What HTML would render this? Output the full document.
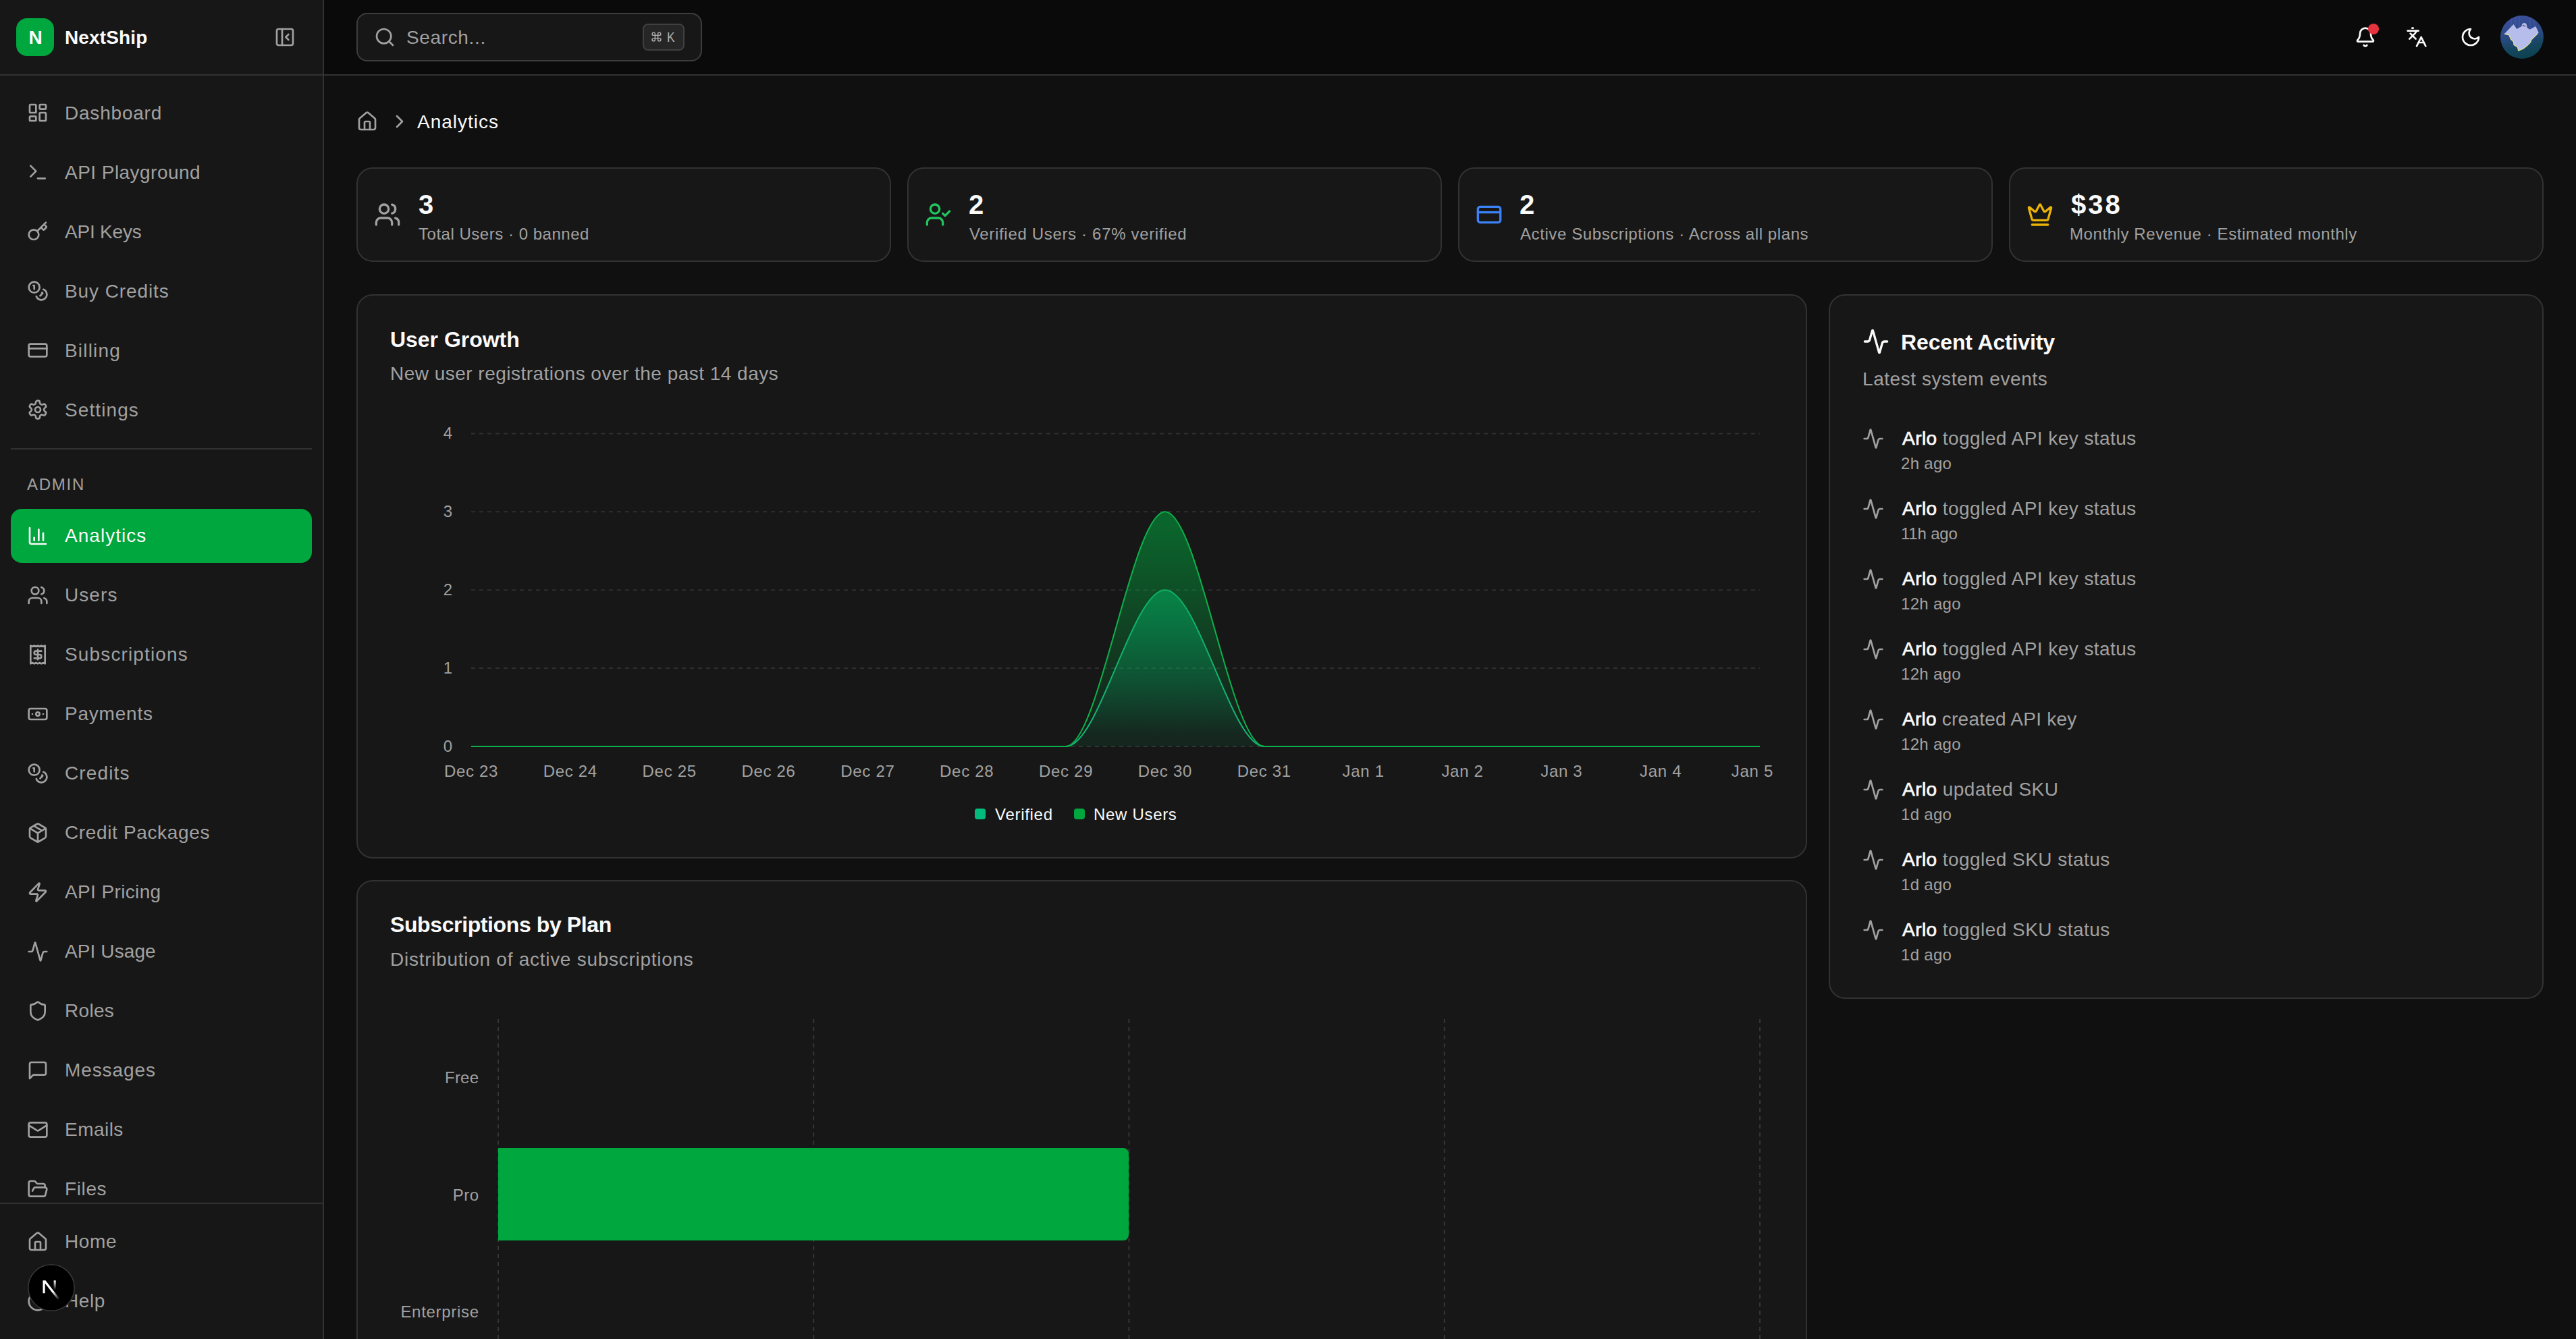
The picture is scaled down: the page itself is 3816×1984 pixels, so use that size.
<!DOCTYPE html><html><head><meta charset="utf-8"><title>Analytics</title><style>
*{box-sizing:border-box;margin:0;padding:0}
html,body{width:3816px;height:1984px;overflow:hidden;background:#101010;font-family:"Liberation Sans", sans-serif}
.t{position:absolute;white-space:nowrap}
.r{position:absolute}
.ic{position:absolute;overflow:visible}
</style></head><body>
<div class="r" style="left:480px;top:0px;width:3336px;height:112px;background:#0a0a0a;border-radius:0px;border-bottom:2px solid #323232"></div>
<div class="r" style="left:0px;top:0px;width:480px;height:1984px;background:#171717;border-radius:0px;border-right:2px solid #323232"></div>
<div class="r" style="left:0px;top:110px;width:478px;height:2px;background:#323232;border-radius:0px;"></div>
<div class="r" style="left:24px;top:27px;width:56px;height:56px;background:#00a63e;border-radius:16px;"></div>
<div class="t" style="left:42.5px;top:42.3px;font-size:28px;line-height:28px;color:#fff;font-weight:700;letter-spacing:0px;">N</div>
<div class="t" style="left:96.0px;top:42.3px;font-size:28px;line-height:28px;color:#fafafa;font-weight:700;letter-spacing:0.14px;">NextShip</div>
<svg class="ic" style="left:406.0px;top:39.0px;width:32px;height:32px" viewBox="0 0 24 24" fill="none" stroke="#a1a1a1" stroke-width="2" stroke-linecap="round" stroke-linejoin="round"><rect width="18" height="18" x="3" y="3" rx="2"/><path d="M9 3v18"/><path d="m16 15-3-3 3-3"/></svg>
<svg class="ic" style="left:40.0px;top:151.0px;width:32px;height:32px" viewBox="0 0 24 24" fill="none" stroke="#a1a1a1" stroke-width="2" stroke-linecap="round" stroke-linejoin="round"><rect x="3" y="3" width="7" height="9" rx="1"/><rect x="14" y="3" width="7" height="5" rx="1"/><rect x="14" y="12" width="7" height="9" rx="1"/><rect x="3" y="16" width="7" height="5" rx="1"/></svg>
<div class="t" style="left:96.0px;top:154.3px;font-size:28px;line-height:28px;color:#a1a1a1;font-weight:400;letter-spacing:0.79px;">Dashboard</div>
<svg class="ic" style="left:40.0px;top:239.0px;width:32px;height:32px" viewBox="0 0 24 24" fill="none" stroke="#a1a1a1" stroke-width="2" stroke-linecap="round" stroke-linejoin="round"><path d="m4 17 6-6-6-6"/><path d="M12 19h8"/></svg>
<div class="t" style="left:96.0px;top:242.3px;font-size:28px;line-height:28px;color:#a1a1a1;font-weight:400;letter-spacing:0.46px;">API Playground</div>
<svg class="ic" style="left:40.0px;top:327.0px;width:32px;height:32px" viewBox="0 0 24 24" fill="none" stroke="#a1a1a1" stroke-width="2" stroke-linecap="round" stroke-linejoin="round"><path d="m15.5 7.5 2.3 2.3a1 1 0 0 0 1.4 0l2.1-2.1a1 1 0 0 0 0-1.4L19 4"/><path d="m21 2-9.6 9.6"/><circle cx="7.5" cy="15.5" r="5.5"/></svg>
<div class="t" style="left:96.0px;top:330.3px;font-size:28px;line-height:28px;color:#a1a1a1;font-weight:400;letter-spacing:-0.2px;">API Keys</div>
<svg class="ic" style="left:40.0px;top:415.0px;width:32px;height:32px" viewBox="0 0 24 24" fill="none" stroke="#a1a1a1" stroke-width="2" stroke-linecap="round" stroke-linejoin="round"><circle cx="8" cy="8" r="6"/><path d="M18.09 10.37A6 6 0 1 1 10.34 18"/><path d="M7 6h1v4"/><path d="m16.71 13.88.7.71-2.82 2.82"/></svg>
<div class="t" style="left:96.0px;top:418.3px;font-size:28px;line-height:28px;color:#a1a1a1;font-weight:400;letter-spacing:0.9px;">Buy Credits</div>
<svg class="ic" style="left:40.0px;top:503.0px;width:32px;height:32px" viewBox="0 0 24 24" fill="none" stroke="#a1a1a1" stroke-width="2" stroke-linecap="round" stroke-linejoin="round"><rect width="20" height="14" x="2" y="5" rx="2"/><line x1="2" x2="22" y1="10" y2="10"/></svg>
<div class="t" style="left:96.0px;top:506.3px;font-size:28px;line-height:28px;color:#a1a1a1;font-weight:400;letter-spacing:1.17px;">Billing</div>
<svg class="ic" style="left:40.0px;top:591.0px;width:32px;height:32px" viewBox="0 0 24 24" fill="none" stroke="#a1a1a1" stroke-width="2" stroke-linecap="round" stroke-linejoin="round"><path d="M12.22 2h-.44a2 2 0 0 0-2 2v.18a2 2 0 0 1-1 1.73l-.43.25a2 2 0 0 1-2 0l-.15-.08a2 2 0 0 0-2.73.73l-.22.38a2 2 0 0 0 .73 2.73l.15.1a2 2 0 0 1 1 1.72v.51a2 2 0 0 1-1 1.74l-.15.09a2 2 0 0 0-.73 2.730l.22.38a2 2 0 0 0 2.73.73l.15-.08a2 2 0 0 1 2 0l.43.25a2 2 0 0 1 1 1.73V20a2 2 0 0 0 2 2h.44a2 2 0 0 0 2-2v-.18a2 2 0 0 1 1-1.73l.43-.25a2 2 0 0 1 2 0l.15.08a2 2 0 0 0 2.73-.73l.22-.39a2 2 0 0 0-.73-2.73l-.15-.08a2 2 0 0 1-1-1.74v-.5a2 2 0 0 1 1-1.74l.15-.09a2 2 0 0 0 .73-2.73l-.22-.38a2 2 0 0 0-2.73-.73l-.15.08a2 2 0 0 1-2 0l-.43-.25a2 2 0 0 1-1-1.73V4a2 2 0 0 0-2-2z"/><circle cx="12" cy="12" r="3"/></svg>
<div class="t" style="left:96.0px;top:594.3px;font-size:28px;line-height:28px;color:#a1a1a1;font-weight:400;letter-spacing:1.1px;">Settings</div>
<div class="r" style="left:16px;top:664px;width:446px;height:2px;background:#323232;border-radius:0px;"></div>
<div class="t" style="left:40.0px;top:705.7px;font-size:24px;line-height:24px;color:#a1a1a1;font-weight:400;letter-spacing:1.75px;">ADMIN</div>
<div class="r" style="left:16px;top:754px;width:446px;height:80px;background:#00a63e;border-radius:16px;"></div>
<svg class="ic" style="left:40.0px;top:778.0px;width:32px;height:32px" viewBox="0 0 24 24" fill="none" stroke="#fafafa" stroke-width="2" stroke-linecap="round" stroke-linejoin="round"><path d="M3 3v16a2 2 0 0 0 2 2h16"/><path d="M18 17V9"/><path d="M13 17V5"/><path d="M8 17v-3"/></svg>
<div class="t" style="left:96.0px;top:780.3px;font-size:28px;line-height:28px;color:#fafafa;font-weight:400;letter-spacing:1.03px;">Analytics</div>
<svg class="ic" style="left:40.0px;top:866.0px;width:32px;height:32px" viewBox="0 0 24 24" fill="none" stroke="#a1a1a1" stroke-width="2" stroke-linecap="round" stroke-linejoin="round"><path d="M16 21v-2a4 4 0 0 0-4-4H6a4 4 0 0 0-4 4v2"/><circle cx="9" cy="7" r="4"/><path d="M22 21v-2a4 4 0 0 0-3-3.87"/><path d="M16 3.13a4 4 0 0 1 0 7.75"/></svg>
<div class="t" style="left:96.0px;top:868.3px;font-size:28px;line-height:28px;color:#a1a1a1;font-weight:400;letter-spacing:1.07px;">Users</div>
<svg class="ic" style="left:40.0px;top:954.0px;width:32px;height:32px" viewBox="0 0 24 24" fill="none" stroke="#a1a1a1" stroke-width="2" stroke-linecap="round" stroke-linejoin="round"><path d="M4 2v20l2-1 2 1 2-1 2 1 2-1 2 1 2-1 2 1V2l-2 1-2-1-2 1-2-1-2 1-2-1-2 1Z"/><path d="M16 8h-6a2 2 0 1 0 0 4h4a2 2 0 1 1 0 4H8"/><path d="M12 17.5v-11"/></svg>
<div class="t" style="left:96.0px;top:956.3px;font-size:28px;line-height:28px;color:#a1a1a1;font-weight:400;letter-spacing:1.14px;">Subscriptions</div>
<svg class="ic" style="left:40.0px;top:1042.0px;width:32px;height:32px" viewBox="0 0 24 24" fill="none" stroke="#a1a1a1" stroke-width="2" stroke-linecap="round" stroke-linejoin="round"><rect width="20" height="12" x="2" y="6" rx="2"/><circle cx="12" cy="12" r="2"/><path d="M6 12h.01M18 12h.01"/></svg>
<div class="t" style="left:96.0px;top:1044.3px;font-size:28px;line-height:28px;color:#a1a1a1;font-weight:400;letter-spacing:0.79px;">Payments</div>
<svg class="ic" style="left:40.0px;top:1130.0px;width:32px;height:32px" viewBox="0 0 24 24" fill="none" stroke="#a1a1a1" stroke-width="2" stroke-linecap="round" stroke-linejoin="round"><circle cx="8" cy="8" r="6"/><path d="M18.09 10.37A6 6 0 1 1 10.34 18"/><path d="M7 6h1v4"/><path d="m16.71 13.88.7.71-2.82 2.82"/></svg>
<div class="t" style="left:96.0px;top:1132.3px;font-size:28px;line-height:28px;color:#a1a1a1;font-weight:400;letter-spacing:1.12px;">Credits</div>
<svg class="ic" style="left:40.0px;top:1218.0px;width:32px;height:32px" viewBox="0 0 24 24" fill="none" stroke="#a1a1a1" stroke-width="2" stroke-linecap="round" stroke-linejoin="round"><path d="M11 21.73a2 2 0 0 0 2 0l7-4A2 2 0 0 0 21 16V8a2 2 0 0 0-1-1.73l-7-4a2 2 0 0 0-2 0l-7 4A2 2 0 0 0 3 8v8a2 2 0 0 0 1 1.73z"/><path d="M12 22V12"/><path d="m3.3 7 7.703 4.734a2 2 0 0 0 1.994 0L20.7 7"/><path d="m7.5 4.27 9 5.15"/></svg>
<div class="t" style="left:96.0px;top:1220.3px;font-size:28px;line-height:28px;color:#a1a1a1;font-weight:400;letter-spacing:0.64px;">Credit Packages</div>
<svg class="ic" style="left:40.0px;top:1306.0px;width:32px;height:32px" viewBox="0 0 24 24" fill="none" stroke="#a1a1a1" stroke-width="2" stroke-linecap="round" stroke-linejoin="round"><path d="M4 14a1 1 0 0 1-.78-1.63l9.9-10.2a.5.5 0 0 1 .86.46l-1.92 6.02A1 1 0 0 0 13 10h7a1 1 0 0 1 .78 1.63l-9.9 10.2a.5.5 0 0 1-.86-.46l1.92-6.02A1 1 0 0 0 11 14z"/></svg>
<div class="t" style="left:96.0px;top:1308.3px;font-size:28px;line-height:28px;color:#a1a1a1;font-weight:400;letter-spacing:0.37px;">API Pricing</div>
<svg class="ic" style="left:40.0px;top:1394.0px;width:32px;height:32px" viewBox="0 0 24 24" fill="none" stroke="#a1a1a1" stroke-width="2" stroke-linecap="round" stroke-linejoin="round"><path d="M22 12h-2.48a2 2 0 0 0-1.930 1.46l-2.35 8.36a.25.25 0 0 1-.48 0L9.24 2.18a.25.25 0 0 0-.48 0l-2.35 8.36A2 2 0 0 1 4.49 12H2"/></svg>
<div class="t" style="left:96.0px;top:1396.3px;font-size:28px;line-height:28px;color:#a1a1a1;font-weight:400;letter-spacing:0.1px;">API Usage</div>
<svg class="ic" style="left:40.0px;top:1482.0px;width:32px;height:32px" viewBox="0 0 24 24" fill="none" stroke="#a1a1a1" stroke-width="2" stroke-linecap="round" stroke-linejoin="round"><path d="M20 13c0 5-3.5 7.5-7.66 8.95a1 1 0 0 1-.67-.01C7.5 20.5 4 18 4 13V6a1 1 0 0 1 1-1c2 0 4.5-1.2 6.24-2.72a1.17 1.17 0 0 1 1.52 0C14.51 3.810 17 5 19 5a1 1 0 0 1 1 1z"/></svg>
<div class="t" style="left:96.0px;top:1484.3px;font-size:28px;line-height:28px;color:#a1a1a1;font-weight:400;letter-spacing:0.3px;">Roles</div>
<svg class="ic" style="left:40.0px;top:1570.0px;width:32px;height:32px" viewBox="0 0 24 24" fill="none" stroke="#a1a1a1" stroke-width="2" stroke-linecap="round" stroke-linejoin="round"><path d="M21 15a2 2 0 0 1-2 2H7l-4 4V5a2 2 0 0 1 2-2h14a2 2 0 0 1 2 2z"/></svg>
<div class="t" style="left:96.0px;top:1572.3px;font-size:28px;line-height:28px;color:#a1a1a1;font-weight:400;letter-spacing:0.9px;">Messages</div>
<svg class="ic" style="left:40.0px;top:1658.0px;width:32px;height:32px" viewBox="0 0 24 24" fill="none" stroke="#a1a1a1" stroke-width="2" stroke-linecap="round" stroke-linejoin="round"><rect width="20" height="16" x="2" y="4" rx="2"/><path d="m22 7-8.97 5.7a1.94 1.94 0 0 1-2.06 0L2 7"/></svg>
<div class="t" style="left:96.0px;top:1660.3px;font-size:28px;line-height:28px;color:#a1a1a1;font-weight:400;letter-spacing:0.46px;">Emails</div>
<svg class="ic" style="left:40.0px;top:1746.0px;width:32px;height:32px" viewBox="0 0 24 24" fill="none" stroke="#a1a1a1" stroke-width="2" stroke-linecap="round" stroke-linejoin="round"><path d="m6 14 1.5-2.9A2 2 0 0 1 9.240 10H20a2 2 0 0 1 1.94 2.5l-1.54 6a2 2 0 0 1-1.95 1.5H4a2 2 0 0 1-2-2V5a2 2 0 0 1 2-2h3.9a2 2 0 0 1 1.69.9l.81 1.2a2 2 0 0 0 1.67.9H18a2 2 0 0 1 2 2v2"/></svg>
<div class="t" style="left:96.0px;top:1748.3px;font-size:28px;line-height:28px;color:#a1a1a1;font-weight:400;letter-spacing:0.62px;">Files</div>
<div class="r" style="left:0px;top:1782px;width:478px;height:202px;background:#171717;border-radius:0px;"></div>
<div class="r" style="left:0px;top:1782px;width:478px;height:2px;background:#323232;border-radius:0px;"></div>
<svg class="ic" style="left:40.0px;top:1824.0px;width:32px;height:32px" viewBox="0 0 24 24" fill="none" stroke="#a1a1a1" stroke-width="2" stroke-linecap="round" stroke-linejoin="round"><path d="M15 21v-8a1 1 0 0 0-1-1h-4a1 1 0 0 0-1 1v8"/><path d="M3 10a2 2 0 0 1 .709-1.528l7-5.999a2 2 0 0 1 2.582 0l7 5.999A2 2 0 0 1 21 10v9a2 2 0 0 1-2 2H5a2 2 0 0 1-2-2z"/></svg>
<div class="t" style="left:96.0px;top:1826.3px;font-size:28px;line-height:28px;color:#a1a1a1;font-weight:400;letter-spacing:0.6px;">Home</div>
<svg class="ic" style="left:40.0px;top:1912.0px;width:32px;height:32px" viewBox="0 0 24 24" fill="none" stroke="#a1a1a1" stroke-width="2" stroke-linecap="round" stroke-linejoin="round"><circle cx="12" cy="12" r="10"/><path d="M9.09 9a3 3 0 0 1 5.83 1c0 2-3 3-3 3"/><path d="M12 17h.01"/></svg>
<div class="t" style="left:96.0px;top:1914.3px;font-size:28px;line-height:28px;color:#a1a1a1;font-weight:400;letter-spacing:0.6px;">Help</div>
<svg class="ic" style="left:41px;top:1873px;width:70px;height:70px" viewBox="0 0 180 180"><defs><linearGradient id="nl0" gradientUnits="userSpaceOnUse" x1="109" y1="116.5" x2="144.5" y2="160.5"><stop stop-color="#fff"/><stop offset="1" stop-color="#fff" stop-opacity="0"/></linearGradient><linearGradient id="nl1" gradientUnits="userSpaceOnUse" x1="121" y1="54" x2="120.8" y2="106.9"><stop stop-color="#fff"/><stop offset="1" stop-color="#fff" stop-opacity="0"/></linearGradient><clipPath id="nlc"><circle cx="90" cy="90" r="90"/></clipPath></defs><g clip-path="url(#nlc)"><circle cx="90" cy="90" r="90" fill="#000"/><g transform="translate(-7.7,-3) translate(90 90) scale(0.68) translate(-90 -90)"><path d="M149.508 157.52L69.142 54H54V125.97H66.1136V69.3836L139.999 164.845C143.333 162.614 146.509 160.165 149.508 157.52Z" fill="url(#nl0)"/><rect x="115" y="54" width="12" height="72" fill="url(#nl1)"/></g></g><circle cx="90" cy="90" r="88" fill="none" stroke="#3a3a3a" stroke-width="4"/></svg>
<div class="r" style="left:528px;top:19px;width:512px;height:72px;background:#171717;border:2px solid #3d3d3d;border-radius:16px;"></div>
<svg class="ic" style="left:554.0px;top:39.0px;width:32px;height:32px" viewBox="0 0 24 24" fill="none" stroke="#a1a1a1" stroke-width="2" stroke-linecap="round" stroke-linejoin="round"><circle cx="11" cy="11" r="8"/><path d="m21 21-4.3-4.3"/></svg>
<div class="t" style="left:602.0px;top:42.3px;font-size:28px;line-height:28px;color:#a1a1a1;font-weight:400;letter-spacing:0.64px;">Search...</div>
<div class="r" style="left:952px;top:35px;width:62px;height:40px;background:#262626;border:2px solid #404040;border-radius:8px;"></div>
<svg class="ic" style="left:964.3px;top:45.5px;width:17px;height:17px" viewBox="0 0 24 24" fill="none" stroke="#b0b0b0" stroke-width="2.1" stroke-linecap="round" stroke-linejoin="round"><path d="M15 6v12a3 3 0 1 0 3-3H6a3 3 0 1 0 3 3V6a3 3 0 1 0-3 3h12a3 3 0 1 0-3-3"/></svg>
<div class="t" style="left:988.0px;top:45.1px;font-size:20px;line-height:20px;color:#b0b0b0;font-weight:400;letter-spacing:0px;transform:scaleX(0.87);transform-origin:0 0">K</div>
<svg class="ic" style="left:3488.0px;top:39.0px;width:32px;height:32px" viewBox="0 0 24 24" fill="none" stroke="#fafafa" stroke-width="2" stroke-linecap="round" stroke-linejoin="round"><path d="M10.268 21a2 2 0 0 0 3.464 0"/><path d="M3.262 15.326A1 1 0 0 0 4 17h16a1 1 0 0 0 .74-1.673C19.41 13.956 18 12.499 18 8A6 6 0 0 0 6 8c0 4.499-1.411 5.956-2.738 7.326"/></svg>
<div class="r" style="left:3508px;top:35px;width:16px;height:16px;background:#e7333f;border-radius:8px;"></div>
<svg class="ic" style="left:3564.0px;top:39.0px;width:32px;height:32px" viewBox="0 0 24 24" fill="none" stroke="#fafafa" stroke-width="2" stroke-linecap="round" stroke-linejoin="round"><path d="m5 8 6 6"/><path d="m4 14 6-6 2-3"/><path d="M2 5h12"/><path d="M7 2h1"/><path d="m22 22-5-10-5 10"/><path d="M14 18h6"/></svg>
<svg class="ic" style="left:3644.0px;top:39.0px;width:32px;height:32px" viewBox="0 0 24 24" fill="none" stroke="#fafafa" stroke-width="2" stroke-linecap="round" stroke-linejoin="round"><path d="M12 3a6 6 0 0 0 9 9 9 9 0 1 1-9-9Z"/></svg>
<svg class="ic" style="left:3696px;top:15px;width:80px;height:80px" viewBox="0 0 80 80"><defs><linearGradient id="av" x1="0.3" y1="0" x2="0.5" y2="1"><stop offset="0" stop-color="#3c4f9c"/><stop offset="0.45" stop-color="#2c4a86"/><stop offset="0.75" stop-color="#15465e"/><stop offset="1" stop-color="#0c4250"/></linearGradient><clipPath id="avc"><circle cx="40" cy="40" r="32"/></clipPath></defs><circle cx="40" cy="40" r="32" fill="url(#av)"/><g clip-path="url(#avc)"><path d="M30 8v34M36 8v22M52 8v30M24 12v30M58 14v26" stroke="#5567b0" stroke-width="1.6" opacity="0.35"/><path d="M43 19.1 C45.5 19 47.2 21 47.2 23.5 L47.5 25.7 L51.4 28.7 L60.3 23.9 L64.8 33.5 L63.3 34.6 L53.8 44.2 L52.6 47.8 L47.8 52.6 L41.8 57.3 L34.6 60.3 L33.5 55 L28 51.4 L27.5 47.2 L23.3 43 L20.9 37 L13.7 35.2 L27.5 20.9 L32.3 28 L39.4 24 C39.6 21 41 19.2 43 19.1 Z" fill="#b7bdeb"/><path d="M13.7 35.2 L20.9 37 L23.3 43 L27.5 47.2 L28 51.4 L33.5 55 L34.6 60.3 L41.8 57.3 L47.8 52.6 L52.6 47.8 L53.8 44.2 L63.3 34.6" fill="none" stroke="#e6e882" stroke-width="1.1"/><circle cx="41.8" cy="22.7" r="0.9" fill="#2a2a40"/><circle cx="44.2" cy="23.6" r="0.9" fill="#2a2a40"/></g></svg>
<svg class="ic" style="left:528.0px;top:164.0px;width:32px;height:32px" viewBox="0 0 24 24" fill="none" stroke="#a1a1a1" stroke-width="2" stroke-linecap="round" stroke-linejoin="round"><path d="M15 21v-8a1 1 0 0 0-1-1h-4a1 1 0 0 0-1 1v8"/><path d="M3 10a2 2 0 0 1 .709-1.528l7-5.999a2 2 0 0 1 2.582 0l7 5.999A2 2 0 0 1 21 10v9a2 2 0 0 1-2 2H5a2 2 0 0 1-2-2z"/></svg>
<svg class="ic" style="left:576.0px;top:164.0px;width:32px;height:32px" viewBox="0 0 24 24" fill="none" stroke="#a1a1a1" stroke-width="2" stroke-linecap="round" stroke-linejoin="round"><path d="m9 18 6-6-6-6"/></svg>
<div class="t" style="left:618.0px;top:167.3px;font-size:28px;line-height:28px;color:#fafafa;font-weight:400;letter-spacing:1.0px;">Analytics</div>
<div class="r" style="left:528px;top:248px;width:792px;height:140px;background:#171717;border:2px solid #323232;border-radius:24px;"></div>
<svg class="ic" style="left:554.0px;top:298.0px;width:40px;height:40px" viewBox="0 0 24 24" fill="none" stroke="#a1a1a1" stroke-width="2" stroke-linecap="round" stroke-linejoin="round"><path d="M16 21v-2a4 4 0 0 0-4-4H6a4 4 0 0 0-4 4v2"/><circle cx="9" cy="7" r="4"/><path d="M22 21v-2a4 4 0 0 0-3-3.87"/><path d="M16 3.13a4 4 0 0 1 0 7.75"/></svg>
<div class="t" style="left:620.0px;top:283.1px;font-size:40px;line-height:40px;color:#fafafa;font-weight:700;letter-spacing:0px;">3</div>
<div class="t" style="left:620.0px;top:334.7px;font-size:24px;line-height:24px;color:#a1a1a1;font-weight:400;letter-spacing:0.52px;">Total Users · 0 banned</div>
<div class="r" style="left:1344px;top:248px;width:792px;height:140px;background:#171717;border:2px solid #323232;border-radius:24px;"></div>
<svg class="ic" style="left:1370.0px;top:298.0px;width:40px;height:40px" viewBox="0 0 24 24" fill="none" stroke="#22c55e" stroke-width="2" stroke-linecap="round" stroke-linejoin="round"><path d="m16 11 2 2 4-4"/><path d="M16 21v-2a4 4 0 0 0-4-4H6a4 4 0 0 0-4 4v2"/><circle cx="9" cy="7" r="4"/></svg>
<div class="t" style="left:1435.0px;top:283.1px;font-size:40px;line-height:40px;color:#fafafa;font-weight:700;letter-spacing:1.5px;">2</div>
<div class="t" style="left:1436.0px;top:334.7px;font-size:24px;line-height:24px;color:#a1a1a1;font-weight:400;letter-spacing:0.67px;">Verified Users · 67% verified</div>
<div class="r" style="left:2160px;top:248px;width:792px;height:140px;background:#171717;border:2px solid #323232;border-radius:24px;"></div>
<svg class="ic" style="left:2186.0px;top:298.0px;width:40px;height:40px" viewBox="0 0 24 24" fill="none" stroke="#3b82f6" stroke-width="2" stroke-linecap="round" stroke-linejoin="round"><rect width="20" height="14" x="2" y="5" rx="2"/><line x1="2" x2="22" y1="10" y2="10"/></svg>
<div class="t" style="left:2251.0px;top:283.1px;font-size:40px;line-height:40px;color:#fafafa;font-weight:700;letter-spacing:1.5px;">2</div>
<div class="t" style="left:2252.0px;top:334.7px;font-size:24px;line-height:24px;color:#a1a1a1;font-weight:400;letter-spacing:0.59px;">Active Subscriptions · Across all plans</div>
<div class="r" style="left:2976px;top:248px;width:792px;height:140px;background:#171717;border:2px solid #323232;border-radius:24px;"></div>
<svg class="ic" style="left:3002.0px;top:298.0px;width:40px;height:40px" viewBox="0 0 24 24" fill="none" stroke="#eab308" stroke-width="2" stroke-linecap="round" stroke-linejoin="round"><path d="M11.562 3.266a.5.5 0 0 1 .876 0L15.39 8.87a1 1 0 0 0 1.516.294L21.183 5.5a.5.5 0 0 1 .798.519l-2.834 10.246a1 1 0 0 1-.956.734H5.81a1 1 0 0 1-.957-.734L2.02 6.02a.5.5 0 0 1 .798-.519l4.276 3.664a1 1 0 0 0 1.516-.294z"/><path d="M5 21h14"/></svg>
<div class="t" style="left:3068.0px;top:283.1px;font-size:40px;line-height:40px;color:#fafafa;font-weight:700;letter-spacing:3.0px;">$38</div>
<div class="t" style="left:3066.0px;top:334.7px;font-size:24px;line-height:24px;color:#a1a1a1;font-weight:400;letter-spacing:0.58px;">Monthly Revenue · Estimated monthly</div>
<div class="r" style="left:528px;top:436px;width:2149px;height:836px;background:#171717;border:2px solid #323232;border-radius:24px;"></div>
<div class="t" style="left:578.0px;top:486.9px;font-size:32px;line-height:32px;color:#fafafa;font-weight:700;letter-spacing:-0.03px;">User Growth</div>
<div class="t" style="left:578.0px;top:540.3px;font-size:28px;line-height:28px;color:#a1a1a1;font-weight:400;letter-spacing:0.48px;">New user registrations over the past 14 days</div>
<svg class="ic" style="left:0;top:0;width:3816px;height:1984px" viewBox="0 0 3816 1984"><defs><linearGradient id="gNew" x1="0" y1="0" x2="0" y2="1"><stop offset="5%" stop-color="#00a63e" stop-opacity="0.55"/><stop offset="95%" stop-color="#00a63e" stop-opacity="0.05"/></linearGradient><linearGradient id="gVer" x1="0" y1="0" x2="0" y2="1"><stop offset="5%" stop-color="#00bc7d" stop-opacity="0.5"/><stop offset="95%" stop-color="#00bc7d" stop-opacity="0.05"/></linearGradient></defs><line x1="698" x2="2607" y1="642.4" y2="642.4" stroke="#2f2f2f" stroke-width="2" stroke-dasharray="6 6"/><line x1="698" x2="2607" y1="758.3" y2="758.3" stroke="#2f2f2f" stroke-width="2" stroke-dasharray="6 6"/><line x1="698" x2="2607" y1="874.2" y2="874.2" stroke="#2f2f2f" stroke-width="2" stroke-dasharray="6 6"/><line x1="698" x2="2607" y1="990.1" y2="990.1" stroke="#2f2f2f" stroke-width="2" stroke-dasharray="6 6"/><line x1="698" x2="2607" y1="1106.0" y2="1106.0" stroke="#2f2f2f" stroke-width="2" stroke-dasharray="6 6"/><path d="M698,1106.0 L1579.1,1106.0 C1628.0,1106.0 1677.0,874.2 1725.9,874.2 C1774.9,874.2 1823.8,1106.0 1872.8,1106.0 L2607,1106.0 Z" fill="url(#gVer)" stroke="none"/><path d="M698,1106.0 L1579.1,1106.0 C1628.0,1106.0 1677.0,874.2 1725.9,874.2 C1774.9,874.2 1823.8,1106.0 1872.8,1106.0 L2607,1106.0" fill="none" stroke="#17b77c" stroke-width="2"/><path d="M698,1106.0 L1579.1,1106.0 C1628.0,1106.0 1677.0,758.3 1725.9,758.3 C1774.9,758.3 1823.8,1106.0 1872.8,1106.0 L2607,1106.0 Z" fill="url(#gNew)" stroke="none"/><path d="M698,1106.0 L1579.1,1106.0 C1628.0,1106.0 1677.0,758.3 1725.9,758.3 C1774.9,758.3 1823.8,1106.0 1872.8,1106.0 L2607,1106.0" fill="none" stroke="#0db14b" stroke-width="2"/></svg>
<div class="t" style="left:560px;width:110px;text-align:right;top:630.1px;font-size:24px;line-height:24px;color:#a1a1a1">4</div>
<div class="t" style="left:560px;width:110px;text-align:right;top:746.0px;font-size:24px;line-height:24px;color:#a1a1a1">3</div>
<div class="t" style="left:560px;width:110px;text-align:right;top:861.9px;font-size:24px;line-height:24px;color:#a1a1a1">2</div>
<div class="t" style="left:560px;width:110px;text-align:right;top:977.8px;font-size:24px;line-height:24px;color:#a1a1a1">1</div>
<div class="t" style="left:560px;width:110px;text-align:right;top:1093.7px;font-size:24px;line-height:24px;color:#a1a1a1">0</div>
<div class="t" style="left:598.0px;width:200px;text-align:center;top:1130.7px;font-size:24px;line-height:24px;color:#a1a1a1;letter-spacing:0.7px">Dec 23</div>
<div class="t" style="left:744.8px;width:200px;text-align:center;top:1130.7px;font-size:24px;line-height:24px;color:#a1a1a1;letter-spacing:0.7px">Dec 24</div>
<div class="t" style="left:891.7px;width:200px;text-align:center;top:1130.7px;font-size:24px;line-height:24px;color:#a1a1a1;letter-spacing:0.7px">Dec 25</div>
<div class="t" style="left:1038.5px;width:200px;text-align:center;top:1130.7px;font-size:24px;line-height:24px;color:#a1a1a1;letter-spacing:0.7px">Dec 26</div>
<div class="t" style="left:1185.4px;width:200px;text-align:center;top:1130.7px;font-size:24px;line-height:24px;color:#a1a1a1;letter-spacing:0.7px">Dec 27</div>
<div class="t" style="left:1332.2px;width:200px;text-align:center;top:1130.7px;font-size:24px;line-height:24px;color:#a1a1a1;letter-spacing:0.7px">Dec 28</div>
<div class="t" style="left:1479.1px;width:200px;text-align:center;top:1130.7px;font-size:24px;line-height:24px;color:#a1a1a1;letter-spacing:0.7px">Dec 29</div>
<div class="t" style="left:1625.9px;width:200px;text-align:center;top:1130.7px;font-size:24px;line-height:24px;color:#a1a1a1;letter-spacing:0.7px">Dec 30</div>
<div class="t" style="left:1772.8px;width:200px;text-align:center;top:1130.7px;font-size:24px;line-height:24px;color:#a1a1a1;letter-spacing:0.7px">Dec 31</div>
<div class="t" style="left:1919.6px;width:200px;text-align:center;top:1130.7px;font-size:24px;line-height:24px;color:#a1a1a1;letter-spacing:0.7px">Jan 1</div>
<div class="t" style="left:2066.5px;width:200px;text-align:center;top:1130.7px;font-size:24px;line-height:24px;color:#a1a1a1;letter-spacing:0.7px">Jan 2</div>
<div class="t" style="left:2213.3px;width:200px;text-align:center;top:1130.7px;font-size:24px;line-height:24px;color:#a1a1a1;letter-spacing:0.7px">Jan 3</div>
<div class="t" style="left:2360.2px;width:200px;text-align:center;top:1130.7px;font-size:24px;line-height:24px;color:#a1a1a1;letter-spacing:0.7px">Jan 4</div>
<div class="t" style="left:2427px;width:200px;text-align:right;top:1130.7px;font-size:24px;line-height:24px;color:#a1a1a1;letter-spacing:0.7px">Jan 5</div>
<div class="r" style="left:1444px;top:1198px;width:16px;height:16px;background:#00bc7d;border-radius:4px;"></div>
<div class="t" style="left:1474.0px;top:1194.7px;font-size:24px;line-height:24px;color:#fafafa;font-weight:400;letter-spacing:0.71px;">Verified</div>
<div class="r" style="left:1591px;top:1198px;width:16px;height:16px;background:#00a63e;border-radius:4px;"></div>
<div class="t" style="left:1620.0px;top:1194.7px;font-size:24px;line-height:24px;color:#fafafa;font-weight:400;letter-spacing:0.69px;">New Users</div>
<div class="r" style="left:528px;top:1304px;width:2149px;height:900px;background:#171717;border:2px solid #323232;border-radius:24px;"></div>
<div class="t" style="left:578.0px;top:1354.4px;font-size:32px;line-height:32px;color:#fafafa;font-weight:700;letter-spacing:-0.39px;">Subscriptions by Plan</div>
<div class="t" style="left:578.0px;top:1408.3px;font-size:28px;line-height:28px;color:#a1a1a1;font-weight:400;letter-spacing:0.73px;">Distribution of active subscriptions</div>
<svg class="ic" style="left:0;top:0;width:3816px;height:1984px" viewBox="0 0 3816 1984"><line x1="738.0" x2="738.0" y1="1510" y2="1984" stroke="#353535" stroke-width="2" stroke-dasharray="6 6"/><line x1="1205.2" x2="1205.2" y1="1510" y2="1984" stroke="#353535" stroke-width="2" stroke-dasharray="6 6"/><line x1="1672.5" x2="1672.5" y1="1510" y2="1984" stroke="#353535" stroke-width="2" stroke-dasharray="6 6"/><line x1="2139.8" x2="2139.8" y1="1510" y2="1984" stroke="#353535" stroke-width="2" stroke-dasharray="6 6"/><line x1="2607.0" x2="2607.0" y1="1510" y2="1984" stroke="#353535" stroke-width="2" stroke-dasharray="6 6"/><path d="M738,1701 H1664 A8,8 0 0 1 1672,1709 V1830 A8,8 0 0 1 1664,1838 H738 Z" fill="#00a63e"/></svg>
<div class="t" style="left:500px;width:209.20px;text-align:right;top:1584.7px;font-size:24px;line-height:24px;color:#a1a1a1;letter-spacing:0.2px">Free</div>
<div class="t" style="left:500px;width:209.45px;text-align:right;top:1758.7px;font-size:24px;line-height:24px;color:#a1a1a1;letter-spacing:0.45px">Pro</div>
<div class="t" style="left:500px;width:209.69px;text-align:right;top:1931.7px;font-size:24px;line-height:24px;color:#a1a1a1;letter-spacing:0.69px">Enterprise</div>
<div class="r" style="left:2709px;top:436px;width:1059px;height:1044px;background:#171717;border:2px solid #323232;border-radius:24px;"></div>
<svg class="ic" style="left:2759.0px;top:486.0px;width:40px;height:40px" viewBox="0 0 24 24" fill="none" stroke="#fafafa" stroke-width="2" stroke-linecap="round" stroke-linejoin="round"><path d="M22 12h-2.48a2 2 0 0 0-1.930 1.46l-2.35 8.36a.25.25 0 0 1-.48 0L9.24 2.18a.25.25 0 0 0-.48 0l-2.35 8.36A2 2 0 0 1 4.49 12H2"/></svg>
<div class="t" style="left:2816.0px;top:490.9px;font-size:32px;line-height:32px;color:#fafafa;font-weight:700;letter-spacing:-0.14px;">Recent Activity</div>
<div class="t" style="left:2759.0px;top:547.8px;font-size:28px;line-height:28px;color:#a1a1a1;font-weight:400;letter-spacing:0.56px;">Latest system events</div>
<svg class="ic" style="left:2759.0px;top:634.0px;width:32px;height:32px" viewBox="0 0 24 24" fill="none" stroke="#a1a1a1" stroke-width="2" stroke-linecap="round" stroke-linejoin="round"><path d="M22 12h-2.48a2 2 0 0 0-1.930 1.46l-2.35 8.36a.25.25 0 0 1-.48 0L9.24 2.18a.25.25 0 0 0-.48 0l-2.35 8.36A2 2 0 0 1 4.49 12H2"/></svg>
<div class="t" style="left:2818.0px;top:636.3px;font-size:28px;line-height:28px;color:#a1a1a1;font-weight:400;letter-spacing:0.45px;"><span style="color:#fafafa;-webkit-text-stroke:0.7px #fafafa">Arlo</span> toggled API key status</div>
<div class="t" style="left:2816.0px;top:674.7px;font-size:24px;line-height:24px;color:#a1a1a1;font-weight:400;letter-spacing:0.3px;">2h ago</div>
<svg class="ic" style="left:2759.0px;top:738.0px;width:32px;height:32px" viewBox="0 0 24 24" fill="none" stroke="#a1a1a1" stroke-width="2" stroke-linecap="round" stroke-linejoin="round"><path d="M22 12h-2.48a2 2 0 0 0-1.930 1.46l-2.35 8.36a.25.25 0 0 1-.48 0L9.24 2.18a.25.25 0 0 0-.48 0l-2.35 8.36A2 2 0 0 1 4.49 12H2"/></svg>
<div class="t" style="left:2818.0px;top:740.3px;font-size:28px;line-height:28px;color:#a1a1a1;font-weight:400;letter-spacing:0.45px;"><span style="color:#fafafa;-webkit-text-stroke:0.7px #fafafa">Arlo</span> toggled API key status</div>
<div class="t" style="left:2816.0px;top:778.7px;font-size:24px;line-height:24px;color:#a1a1a1;font-weight:400;letter-spacing:-0.2px;">11h ago</div>
<svg class="ic" style="left:2759.0px;top:842.0px;width:32px;height:32px" viewBox="0 0 24 24" fill="none" stroke="#a1a1a1" stroke-width="2" stroke-linecap="round" stroke-linejoin="round"><path d="M22 12h-2.48a2 2 0 0 0-1.930 1.46l-2.35 8.36a.25.25 0 0 1-.48 0L9.24 2.18a.25.25 0 0 0-.48 0l-2.35 8.36A2 2 0 0 1 4.49 12H2"/></svg>
<div class="t" style="left:2818.0px;top:844.3px;font-size:28px;line-height:28px;color:#a1a1a1;font-weight:400;letter-spacing:0.45px;"><span style="color:#fafafa;-webkit-text-stroke:0.7px #fafafa">Arlo</span> toggled API key status</div>
<div class="t" style="left:2816.0px;top:882.7px;font-size:24px;line-height:24px;color:#a1a1a1;font-weight:400;letter-spacing:0.3px;">12h ago</div>
<svg class="ic" style="left:2759.0px;top:946.0px;width:32px;height:32px" viewBox="0 0 24 24" fill="none" stroke="#a1a1a1" stroke-width="2" stroke-linecap="round" stroke-linejoin="round"><path d="M22 12h-2.48a2 2 0 0 0-1.930 1.46l-2.35 8.36a.25.25 0 0 1-.48 0L9.24 2.18a.25.25 0 0 0-.48 0l-2.35 8.36A2 2 0 0 1 4.49 12H2"/></svg>
<div class="t" style="left:2818.0px;top:948.3px;font-size:28px;line-height:28px;color:#a1a1a1;font-weight:400;letter-spacing:0.45px;"><span style="color:#fafafa;-webkit-text-stroke:0.7px #fafafa">Arlo</span> toggled API key status</div>
<div class="t" style="left:2816.0px;top:986.7px;font-size:24px;line-height:24px;color:#a1a1a1;font-weight:400;letter-spacing:0.3px;">12h ago</div>
<svg class="ic" style="left:2759.0px;top:1050.0px;width:32px;height:32px" viewBox="0 0 24 24" fill="none" stroke="#a1a1a1" stroke-width="2" stroke-linecap="round" stroke-linejoin="round"><path d="M22 12h-2.48a2 2 0 0 0-1.930 1.46l-2.35 8.36a.25.25 0 0 1-.48 0L9.24 2.18a.25.25 0 0 0-.48 0l-2.35 8.36A2 2 0 0 1 4.49 12H2"/></svg>
<div class="t" style="left:2818.0px;top:1052.3px;font-size:28px;line-height:28px;color:#a1a1a1;font-weight:400;letter-spacing:0.24px;"><span style="color:#fafafa;-webkit-text-stroke:0.7px #fafafa">Arlo</span> created API key</div>
<div class="t" style="left:2816.0px;top:1090.7px;font-size:24px;line-height:24px;color:#a1a1a1;font-weight:400;letter-spacing:0.3px;">12h ago</div>
<svg class="ic" style="left:2759.0px;top:1154.0px;width:32px;height:32px" viewBox="0 0 24 24" fill="none" stroke="#a1a1a1" stroke-width="2" stroke-linecap="round" stroke-linejoin="round"><path d="M22 12h-2.48a2 2 0 0 0-1.930 1.46l-2.35 8.36a.25.25 0 0 1-.48 0L9.24 2.18a.25.25 0 0 0-.48 0l-2.35 8.36A2 2 0 0 1 4.49 12H2"/></svg>
<div class="t" style="left:2818.0px;top:1156.3px;font-size:28px;line-height:28px;color:#a1a1a1;font-weight:400;letter-spacing:0.45px;"><span style="color:#fafafa;-webkit-text-stroke:0.7px #fafafa">Arlo</span> updated SKU</div>
<div class="t" style="left:2816.0px;top:1194.7px;font-size:24px;line-height:24px;color:#a1a1a1;font-weight:400;letter-spacing:0.3px;">1d ago</div>
<svg class="ic" style="left:2759.0px;top:1258.0px;width:32px;height:32px" viewBox="0 0 24 24" fill="none" stroke="#a1a1a1" stroke-width="2" stroke-linecap="round" stroke-linejoin="round"><path d="M22 12h-2.48a2 2 0 0 0-1.930 1.46l-2.35 8.36a.25.25 0 0 1-.48 0L9.24 2.18a.25.25 0 0 0-.48 0l-2.35 8.36A2 2 0 0 1 4.49 12H2"/></svg>
<div class="t" style="left:2818.0px;top:1260.3px;font-size:28px;line-height:28px;color:#a1a1a1;font-weight:400;letter-spacing:0.45px;"><span style="color:#fafafa;-webkit-text-stroke:0.7px #fafafa">Arlo</span> toggled SKU status</div>
<div class="t" style="left:2816.0px;top:1298.7px;font-size:24px;line-height:24px;color:#a1a1a1;font-weight:400;letter-spacing:0.3px;">1d ago</div>
<svg class="ic" style="left:2759.0px;top:1362.0px;width:32px;height:32px" viewBox="0 0 24 24" fill="none" stroke="#a1a1a1" stroke-width="2" stroke-linecap="round" stroke-linejoin="round"><path d="M22 12h-2.48a2 2 0 0 0-1.930 1.46l-2.35 8.36a.25.25 0 0 1-.48 0L9.24 2.18a.25.25 0 0 0-.48 0l-2.35 8.36A2 2 0 0 1 4.49 12H2"/></svg>
<div class="t" style="left:2818.0px;top:1364.3px;font-size:28px;line-height:28px;color:#a1a1a1;font-weight:400;letter-spacing:0.45px;"><span style="color:#fafafa;-webkit-text-stroke:0.7px #fafafa">Arlo</span> toggled SKU status</div>
<div class="t" style="left:2816.0px;top:1402.7px;font-size:24px;line-height:24px;color:#a1a1a1;font-weight:400;letter-spacing:0.3px;">1d ago</div>
</body></html>
